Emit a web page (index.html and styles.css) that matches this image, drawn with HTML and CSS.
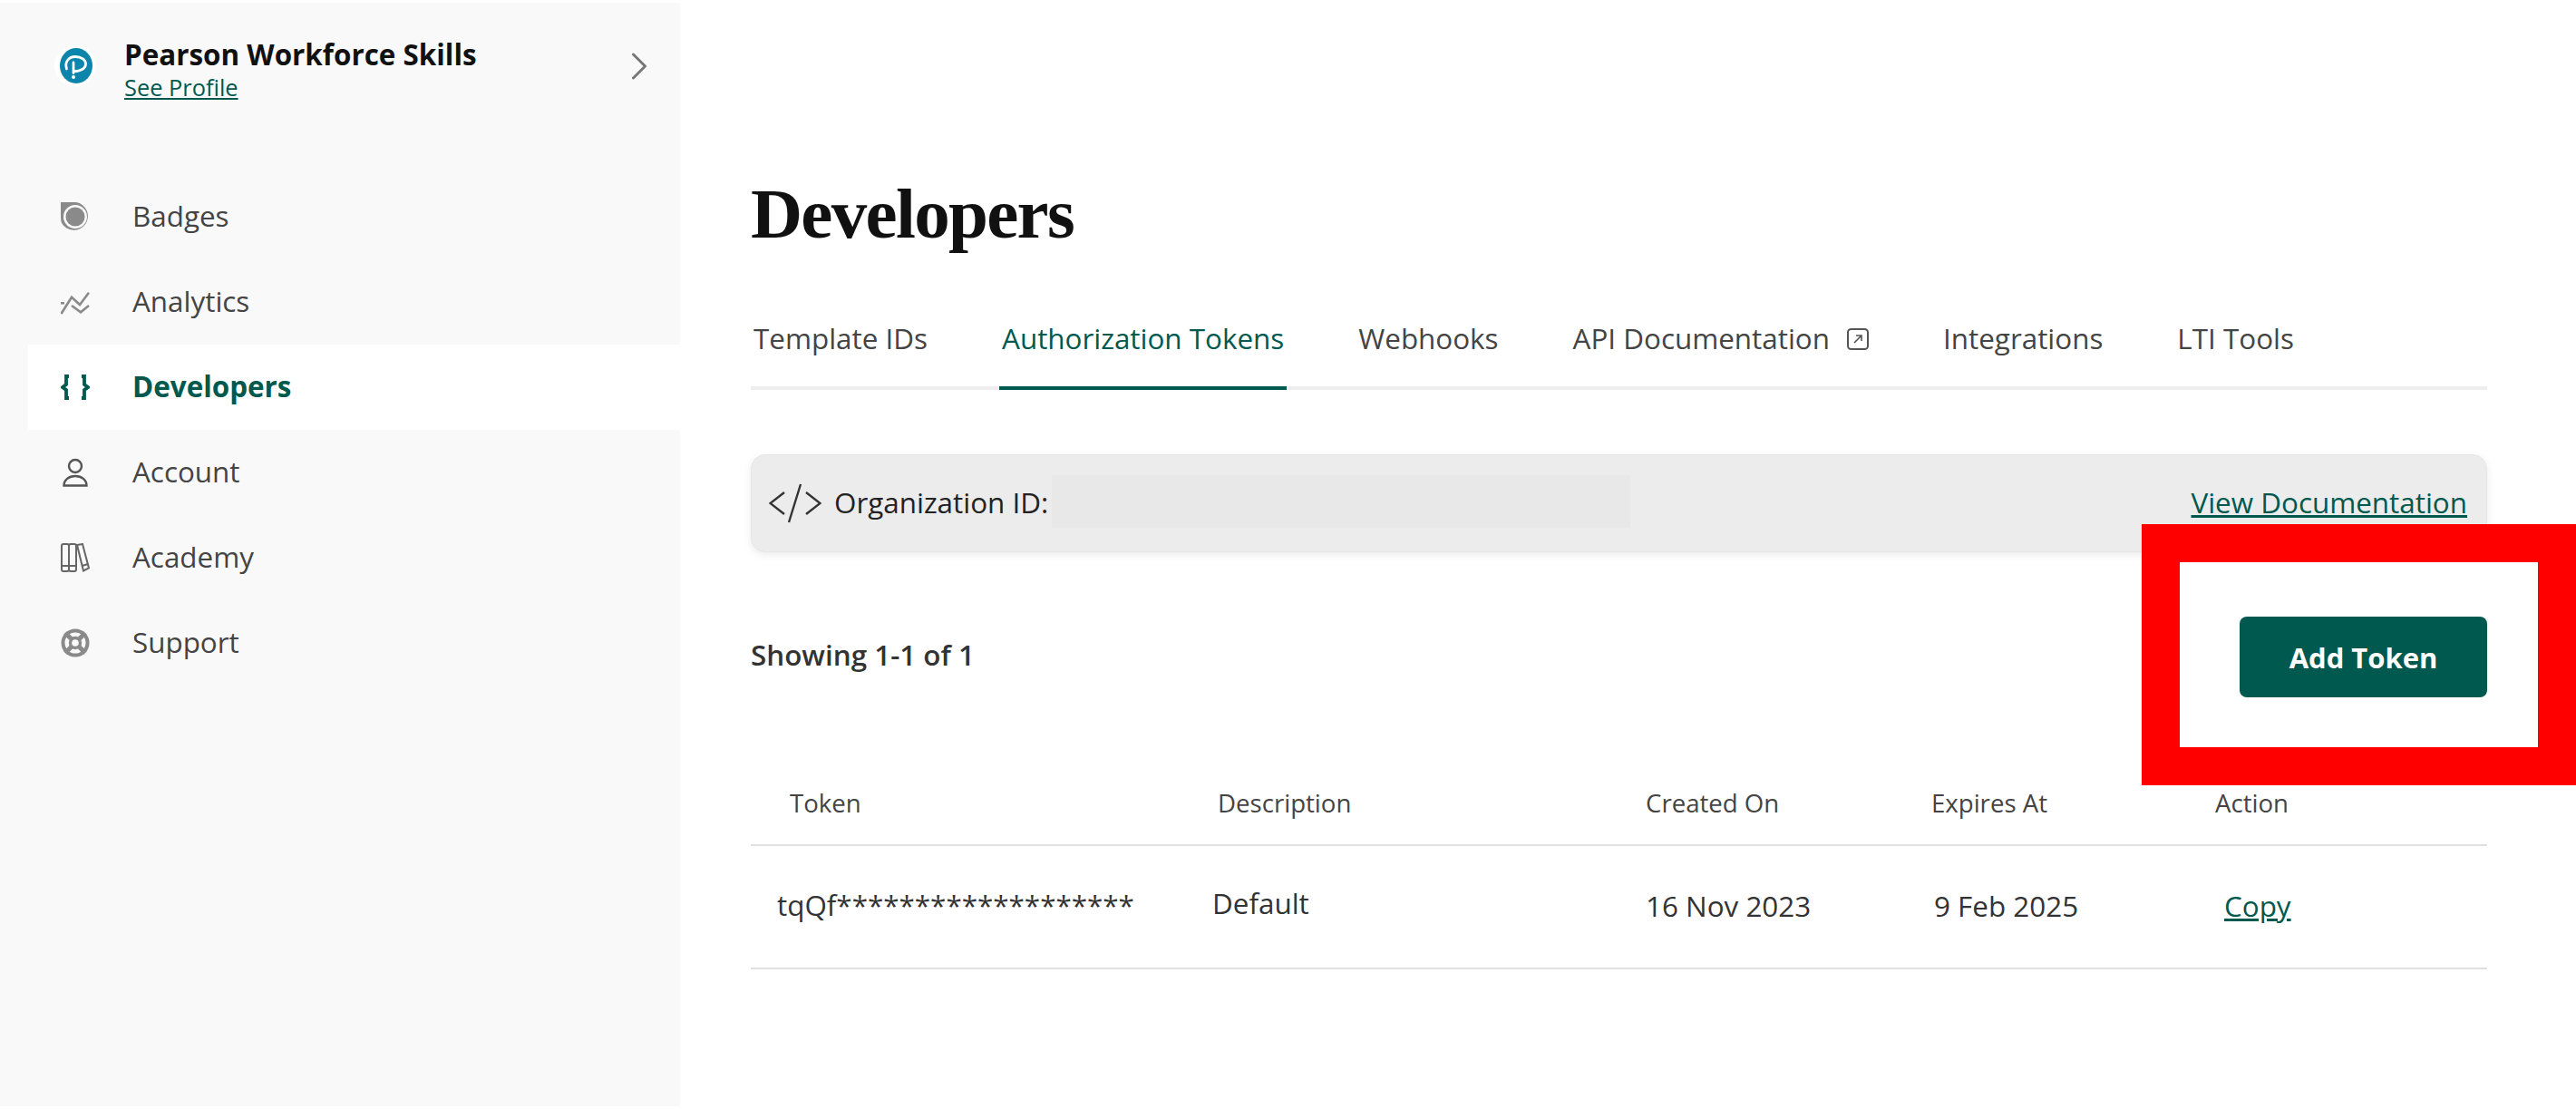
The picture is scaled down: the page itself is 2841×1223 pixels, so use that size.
FILE: index.html
```html
<!DOCTYPE html>
<html lang="en">
<head>
<meta charset="utf-8">
<title>Developers</title>
<link rel="stylesheet" href="styles.css">
</head>
<body>
<div class="app">
  <aside class="sidebar">
    <div class="profile">
      <svg class="logo" viewBox="0 0 46 46" width="46" height="46"><circle cx="23" cy="23" r="23" fill="#fff"/><ellipse cx="24" cy="22.500" rx="18" ry="19.500" fill="#0b85ab"/><path d="M13.500 26C11 18 16 12.500 23 12.500C30 12.500 34.500 16 34.500 20.500C34.500 25.500 29 28.500 21 29M21 19V30.500" fill="none" stroke="#fff" stroke-width="2.800" stroke-linecap="round"/><circle cx="21" cy="35" r="2" fill="#fff"/></svg>
      <div class="org">
        <div class="org-name">Pearson Workforce Skills</div>
        <a class="org-link" href="#">See Profile</a>
      </div>
      <svg class="chev" viewBox="0 0 18 30" width="18" height="30"><path d="M2.500 2L15.500 15L2.500 28" fill="none" stroke="#777" stroke-width="3" stroke-linecap="round" stroke-linejoin="round"/></svg>
    </div>
    <nav class="nav">
      <a class="nav-item" href="#">
        <svg class="nav-icon" viewBox="0 0 32 32" width="32" height="32"><path d="M0 0H17A15.500 15.500 0 1 1 1 23Q0 20 0 16Z" fill="#8a8a8a"/><circle cx="16" cy="16" r="13" fill="#f9f9f9"/><circle cx="16" cy="16" r="10.500" fill="#8a8a8a"/></svg>
        <span>Badges</span>
      </a>
      <a class="nav-item" href="#">
        <svg class="nav-icon" viewBox="0 0 32 32" width="32" height="32"><g fill="none" stroke="#8a8a8a" stroke-width="2.600"><path d="M0.500 29L12 10.700L21 19L31 5.700"/><path d="M12 20L22 27.300L31 20"/><path d="M0 17.300H4"/></g></svg>
        <span>Analytics</span>
      </a>
      <a class="nav-item active" href="#">
        <svg class="nav-icon" viewBox="0 0 32 32" width="32" height="32"><g fill="none" stroke="#00594e" stroke-width="3.800"><path d="M9 4H6V13L2 16L6 19V28H9"/><path d="M23 4H26V13L30 16L26 19V28H23"/></g></svg>
        <span>Developers</span>
      </a>
      <a class="nav-item" href="#">
        <svg class="nav-icon" viewBox="0 0 32 32" width="32" height="32"><g fill="none" stroke="#555" stroke-width="2.400"><circle cx="16" cy="9" r="7"/><path d="M3.500 30.500C3.500 24 9 20 16 20C23 20 28.500 24 28.500 30.500Z"/></g></svg>
        <span>Account</span>
      </a>
      <a class="nav-item" href="#">
        <svg class="nav-icon" viewBox="0 0 32 32" width="32" height="32"><g fill="none" stroke="#666" stroke-width="2"><rect x="1" y="1" width="8" height="30" rx="2"/><rect x="9" y="1" width="8" height="30" rx="2"/><path d="M1 25H17"/><path d="M18 2L24 1L31 27.500L25 30.500Z"/><path d="M23.500 25L30 23"/></g></svg>
        <span>Academy</span>
      </a>
      <a class="nav-item" href="#">
        <svg class="nav-icon" viewBox="0 0 32 32" width="32" height="32"><g fill="none" stroke="#8a8a8a"><circle cx="16" cy="16" r="13.500" stroke-width="4"/><circle cx="16" cy="16" r="5.500" stroke-width="3.400"/><path d="M5 5L12 12M27 5L20 12M5 27L12 20M27 27L20 20" stroke-width="5"/></g></svg>
        <span>Support</span>
      </a>
    </nav>
  </aside>
  <main class="main">
    <h1 class="title">Developers</h1>
    <div class="tabs">
      <a class="tab" href="#">Template IDs</a>
      <a class="tab active" href="#">Authorization Tokens</a>
      <a class="tab" href="#">Webhooks</a>
      <a class="tab" href="#">API Documentation
        <svg class="ext" viewBox="0 0 24 24" width="24" height="24"><rect x="1" y="1" width="22" height="22" rx="3.500" fill="none" stroke="#555" stroke-width="2"/><path d="M8 16L15.500 8.500M10 8H16V14" fill="none" stroke="#555" stroke-width="1.600"/></svg>
      </a>
      <a class="tab" href="#">Integrations</a>
      <a class="tab" href="#">LTI Tools</a>
    </div>
    <div class="orgbar">
      <svg class="code" viewBox="0 0 58 44" width="58" height="44"><path d="M17 10L1.500 22L17 34M41 10L56.500 22L41 34M35 1L22 43" fill="none" stroke="#333" stroke-width="2.400"/></svg>
      <span class="org-label">Organization ID:</span>
      <span class="redacted"></span>
      <a class="doc-link" href="#">View Documentation</a>
    </div>
    <div class="toolbar">
      <span class="showing">Showing 1-1 of 1</span>
      <button class="add" type="button">Add Token</button>
    </div>
    <div class="table">
      <div class="row head">
        <span class="h-token">Token</span>
        <span class="h-desc">Description</span>
        <span>Created On</span>
        <span>Expires At</span>
        <span>Action</span>
      </div>
      <div class="row body">
        <span class="c-token">tqQf*******************</span>
        <span class="c-desc">Default</span>
        <span>16 Nov 2023</span>
        <span class="c-exp">9 Feb 2025</span>
        <a class="c-act" href="#">Copy</a>
      </div>
    </div>
  </main>
</div>
<div class="highlight"></div>
</body>
</html>
```
FILE: styles.css
```css
* { box-sizing: border-box; }
html, body { margin: 0; height: 100%; background: #fff; overflow: hidden; }
body { font-family: "Open Sans", sans-serif; color: #333; }
a { text-decoration: none; color: inherit; }
.app { display: flex; height: 1223px; padding-top: 3px; }
.sidebar { width: 750px; height: 1217px; background: #f9f9f9; flex: none; padding-left: 31px; }
.profile { display: flex; align-items: center; height: 118px; padding-top: 22px; position: relative; }
.logo { margin-left: 29px; flex: none; }
.org { margin-left: 31px; flex: 1; padding-top: 5px; }
.org-name { font-size: 31.400px; font-weight: 700; color: #111; line-height: 40px; }
.org-link { font-size: 25.400px; line-height: 30px; margin-top: 1px; color: #00594e; text-decoration: underline; display: block; }
.chev { margin-right: 36px; }
.nav { margin-top: 71px; display: flex; flex-direction: column; }
.nav-item { display: flex; align-items: center; height: 94px; font-size: 31.400px; color: #444; padding-left: 36px; }
.nav-item span { margin: 0 0 4px 47px; }
.nav-icon { flex: none; }
.nav-item.active { background: #fff; color: #00594e; font-weight: 700; }
.main { flex: 1; padding: 0 98px 0 78px; }
.title { margin: 0; padding-top: 189px; font-family: "Liberation Serif", serif; font-size: 79px; letter-spacing: -1.700px; line-height: 88px; font-weight: 700; color: #111; }
.tabs { display: flex; gap: 76px; margin-top: 45px; border-bottom: 4px solid #eee; height: 105px; }
.tab { display: flex; align-items: flex-start; padding: 27px 3px 0; height: 105px; font-size: 31.400px; line-height: 42px; color: #444; }
.tab.active { color: #00594e; border-bottom: 4px solid #00594e; }
.ext { margin: 10px 0 0 19px; }
.orgbar { display: flex; align-items: center; height: 108px; margin-top: 71px; background: #ececec; border: 1px solid #e6e6e6; border-radius: 16px; box-shadow: 0 3px 10px rgba(0,0,0,.08); padding: 0 21px 0 19px; }
.code { flex: none; }
.org-label { font-size: 31.400px; color: #222; margin: 0 0 3px 14px; }
.redacted { width: 638px; height: 58px; background: #e8e8e8; margin: 0 0 4px 4px; }
.doc-link { margin: 0 0 3px auto; font-size: 31.400px; color: #00594e; text-decoration: underline; }
.toolbar { display: flex; align-items: center; justify-content: space-between; height: 89px; margin-top: 71px; }
.showing { font-size: 31.400px; font-weight: 600; color: #333; margin-bottom: 6px; }
.add { width: 273px; height: 89px; border: 0; border-radius: 8px; background: #00594e; color: #fff; font: 700 31px "Open Sans", sans-serif; }
.table { margin-top: 70px; }
.row { display: grid; grid-template-columns: 509px 478px 315px 313px 1fr; align-items: center; }
.head { height: 94px; border-bottom: 2px solid #e0e0e0; font-size: 27.600px; color: #444; }
.body { height: 136px; padding-bottom: 3px; border-bottom: 2px solid #e0e0e0; font-size: 31.400px; color: #333; }
.h-token { padding-left: 43px; }
.h-desc { padding-left: 6px; }
.c-token { padding-left: 29px; margin-bottom: 3px; }
.c-desc { margin-bottom: 6px; }
.c-exp { padding-left: 3px; }
.c-act { padding-left: 10px; color: #00594e; text-decoration: underline; }
.highlight { position: absolute; left: 2362px; top: 578px; width: 479px; height: 288px; border: 42px solid #f00; }
```
